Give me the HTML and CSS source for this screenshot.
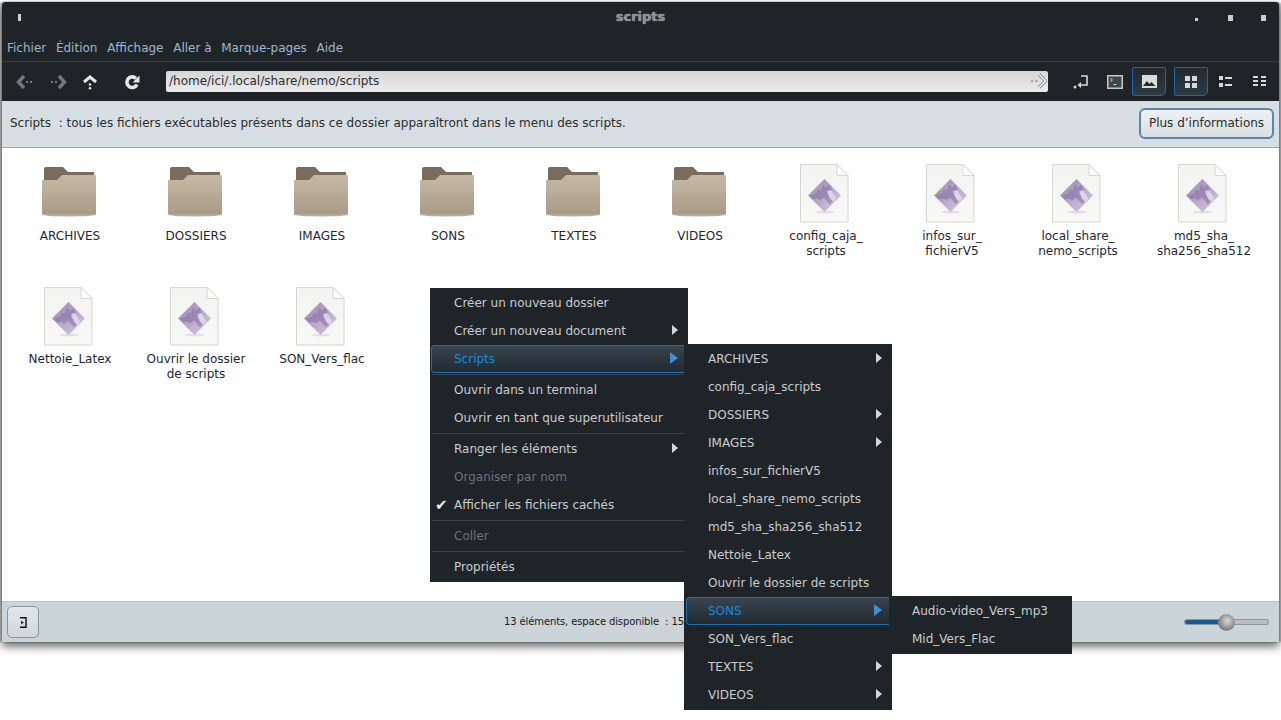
FILE: index.html
```html
<!DOCTYPE html>
<html lang="fr">
<head>
<meta charset="utf-8">
<title>scripts</title>
<link rel="stylesheet" href="styles.css">
</head>
<body>
<svg class="defs" width="0" height="0">
  <defs>
    <linearGradient id="fold" x1="0" y1="0" x2="0" y2="1"><stop offset="0" stop-color="#c6baa7"/><stop offset="1" stop-color="#a99b84"/></linearGradient>
    <linearGradient id="page" x1="0" y1="0" x2="0" y2="1"><stop offset="0" stop-color="#f3f3f1"/><stop offset="1" stop-color="#f8f8f7"/></linearGradient>
    <linearGradient id="dia" x1="0" y1="0" x2="1" y2="1"><stop offset="0" stop-color="#9884b2"/><stop offset="1" stop-color="#d8cde2"/></linearGradient>
    <symbol id="folder" viewBox="0 0 56 60">
      <ellipse cx="28" cy="50.500" rx="27.500" ry="2" fill="#77746f" opacity=".6"/>
      <path d="M3 5a2 2 0 0 1 2-2h17l5 5h26v12H3z" fill="#7a6c5a"/>
      <path d="M21 11h33a1 1 0 0 1 1 1v37a1 1 0 0 1-1 1H2a1 1 0 0 1-1-1V17a1 1 0 0 1 1-1h14z" fill="url(#fold)"/>
    </symbol>
    <symbol id="script" viewBox="0 0 50 60">
      <path d="M.5 .5H37L48 11.500V58H.5z" fill="url(#page)" stroke="#d6d6d4"/>
      <path d="M37 .5v11h11z" fill="#fff" stroke="#d6d6d4"/>
      <ellipse cx="25" cy="48" rx="10" ry="1.500" fill="#e2e0e3"/>
      <path d="M24.500 15L41 31.500 24.500 48 8 31.500z" fill="url(#dia)"/>
      <path d="M10 31.500l6-2 2-4 3 1 2-6 3 3 3-3 3 5-5 4 6 7-3 4-6-7-4 3-3-2-4 1z" fill="#7f6a9b" opacity=".5"/>
      <path d="M27 27l3 8 4 3 2-4-5-8z" fill="#eae4ef" opacity=".7"/>
    </symbol>
  </defs>
</svg>

<div class="window">
  <header class="titlebar">
    <span class="wm-left"></span>
    <span class="title">scripts</span>
    <span class="wm-buttons">
      <span class="wm wm-min"></span>
      <span class="wm wm-max"></span>
      <span class="wm wm-close"></span>
    </span>
  </header>
  <nav class="menubar">
    <span>Fichier</span><span>Édition</span><span>Affichage</span><span>Aller à</span><span>Marque-pages</span><span>Aide</span>
  </nav>
  <div class="toolbar">
    <div class="nav-group">
      <svg class="tb-icon dim" width="18" height="16" viewBox="0 0 18 16"><path d="M8 2L2.500 8 8 14" fill="none" stroke="currentColor" stroke-width="3.400"/><circle cx="11" cy="8" r="1.200" fill="currentColor"/><circle cx="15" cy="8" r="1.200" fill="currentColor"/></svg>
      <svg class="tb-icon dim" width="18" height="16" viewBox="0 0 18 16"><path d="M10 2l5.500 6-5.500 6" fill="none" stroke="currentColor" stroke-width="3.400"/><circle cx="3" cy="8" r="1.200" fill="currentColor"/><circle cx="7" cy="8" r="1.200" fill="currentColor"/></svg>
      <svg class="tb-icon" width="16" height="16" viewBox="0 0 16 16"><path d="M2 8l6-5 6 5" fill="none" stroke="currentColor" stroke-width="3"/><circle cx="8" cy="10.500" r="1.300" fill="currentColor"/><circle cx="8" cy="14.300" r="1.300" fill="currentColor"/></svg>
      <svg class="tb-icon reload" width="16" height="16" viewBox="0 0 16 16"><path d="M13 10.500A5.300 5.300 0 1 1 12 4.500" fill="none" stroke="currentColor" stroke-width="3.600"/><path d="M15.500 1.500v7h-7z" fill="currentColor"/></svg>
    </div>
    <div class="path-entry">
      <span>/home/ici/.local/share/nemo/scripts</span>
      <svg width="18" height="16" viewBox="0 0 18 16"><path d="M10 1.500l6.500 6.500-6.500 6.500" fill="none" stroke="#8f8f8f" stroke-width="3.200"/><path d="M10 1.500l6.500 6.500-6.500 6.500" fill="none" stroke="#f4f4f4" stroke-width="1.400"/><circle cx="3" cy="8" r="1.300" fill="#aaa"/><circle cx="7.500" cy="8" r="1.300" fill="#aaa"/></svg>
    </div>
    <div class="tool-group">
      <span class="tool"><svg width="16" height="16" viewBox="0 0 16 16"><path d="M8 2h6v9H6" fill="none" stroke="#d8d8d8" stroke-width="1.600"/><path d="M8 8l-3.500 3L8 14z" fill="#d8d8d8"/><circle cx="2" cy="13" r="1.500" fill="#d8d8d8"/></svg></span>
      <span class="tool"><svg width="16" height="14" viewBox="0 0 16 14"><rect x=".75" y=".75" width="14.500" height="12.500" fill="#3f4648" stroke="#c8c8c8" stroke-width="1.500"/><path d="M3.500 3.500l2 1.500-2 1.500M6.500 9.500h3" fill="none" stroke="#d8d8d8"/></svg></span>
      <span class="tool active"><svg width="15" height="13" viewBox="0 0 15 13"><rect width="15" height="13" fill="#dcdcdc"/><path d="M1 11l4-5 2.500 3 2-2 4 4z" fill="#22282c"/></svg></span>
    </div>
    <div class="tool-group views">
      <span class="tool active"><svg width="12" height="12" viewBox="0 0 12 12" fill="#d8d8d8"><rect width="5" height="5"/><rect x="7" width="5" height="5"/><rect y="7" width="5" height="5"/><rect x="7" y="7" width="5" height="5"/></svg></span>
      <span class="tool"><svg width="13" height="11" viewBox="0 0 13 11" fill="#d8d8d8"><rect width="4" height="4"/><rect x="6" y="1" width="7" height="2"/><rect y="7" width="4" height="4"/><rect x="6" y="8" width="7" height="2"/></svg></span>
      <span class="tool"><svg width="13" height="11" viewBox="0 0 13 11" fill="#d8d8d8"><rect width="5" height="2"/><rect x="8" width="5" height="2"/><rect y="4" width="5" height="2"/><rect x="8" y="4" width="5" height="2"/><rect y="8" width="5" height="2"/><rect x="8" y="8" width="5" height="2"/></svg></span>
    </div>
  </div>
  <div class="infobar">
    <span>Scripts  : tous les fichiers exécutables présents dans ce dossier apparaîtront dans le menu des scripts.</span>
    <button class="more">Plus d’informations</button>
  </div>
  <main class="files">
    <figure class="item"><svg class="icon" width="56" height="60"><use href="#folder"/></svg><figcaption>ARCHIVES</figcaption></figure>
    <figure class="item"><svg class="icon" width="56" height="60"><use href="#folder"/></svg><figcaption>DOSSIERS</figcaption></figure>
    <figure class="item"><svg class="icon" width="56" height="60"><use href="#folder"/></svg><figcaption>IMAGES</figcaption></figure>
    <figure class="item"><svg class="icon" width="56" height="60"><use href="#folder"/></svg><figcaption>SONS</figcaption></figure>
    <figure class="item"><svg class="icon" width="56" height="60"><use href="#folder"/></svg><figcaption>TEXTES</figcaption></figure>
    <figure class="item"><svg class="icon" width="56" height="60"><use href="#folder"/></svg><figcaption>VIDEOS</figcaption></figure>
    <figure class="item"><svg class="icon" width="50" height="60"><use href="#script"/></svg><figcaption>config_caja_<br>scripts</figcaption></figure>
    <figure class="item"><svg class="icon" width="50" height="60"><use href="#script"/></svg><figcaption>infos_sur_<br>fichierV5</figcaption></figure>
    <figure class="item"><svg class="icon" width="50" height="60"><use href="#script"/></svg><figcaption>local_share_<br>nemo_scripts</figcaption></figure>
    <figure class="item"><svg class="icon" width="50" height="60"><use href="#script"/></svg><figcaption>md5_sha_<br>sha256_sha512</figcaption></figure>
    <figure class="item"><svg class="icon" width="50" height="60"><use href="#script"/></svg><figcaption>Nettoie_Latex</figcaption></figure>
    <figure class="item"><svg class="icon" width="50" height="60"><use href="#script"/></svg><figcaption>Ouvrir le dossier<br>de scripts</figcaption></figure>
    <figure class="item"><svg class="icon" width="50" height="60"><use href="#script"/></svg><figcaption>SON_Vers_flac</figcaption></figure>
  </main>
  <footer class="statusbar">
    <span class="side-btn"><svg width="8" height="11" viewBox="0 0 8 11"><path d="M1 .7h6v9.600H1" fill="none" stroke="#111" stroke-width="1.400"/><path d="M2 3.500l3 2-3 2z" fill="#333"/></svg></span>
    <span class="status-text">13 éléments, espace disponible  : 15,3 Go</span>
    <span class="slider"><span class="slider-fill"></span><span class="knob"></span></span>
  </footer>
</div>

<div class="menu menu-main">
  <div class="row">Créer un nouveau dossier</div>
  <div class="row sub">Créer un nouveau document</div>
  <div class="row sub hot">Scripts</div>
  <div class="sep"></div>
  <div class="row">Ouvrir dans un terminal</div>
  <div class="row">Ouvrir en tant que superutilisateur</div>
  <div class="sep"></div>
  <div class="row sub">Ranger les éléments</div>
  <div class="row off">Organiser par nom</div>
  <div class="row checked">Afficher les fichiers cachés</div>
  <div class="sep"></div>
  <div class="row off">Coller</div>
  <div class="sep"></div>
  <div class="row">Propriétés</div>
</div>
<div class="menu menu-scripts">
  <div class="row sub">ARCHIVES</div>
  <div class="row">config_caja_scripts</div>
  <div class="row sub">DOSSIERS</div>
  <div class="row sub">IMAGES</div>
  <div class="row">infos_sur_fichierV5</div>
  <div class="row">local_share_nemo_scripts</div>
  <div class="row">md5_sha_sha256_sha512</div>
  <div class="row">Nettoie_Latex</div>
  <div class="row">Ouvrir le dossier de scripts</div>
  <div class="row sub hot">SONS</div>
  <div class="row">SON_Vers_flac</div>
  <div class="row sub">TEXTES</div>
  <div class="row sub">VIDEOS</div>
</div>
<div class="menu menu-sons">
  <div class="row">Audio-video_Vers_mp3</div>
  <div class="row">Mid_Vers_Flac</div>
</div>
</body>
</html>
```
FILE: styles.css
```css
* { box-sizing: border-box; }
html, body { margin: 0; height: 720px; overflow: hidden; background: #fff; }
body { font: 12px/15px "DejaVu Sans", sans-serif; position: relative; }
.defs { position: absolute; }

.window {
  margin: 2px 2px 0;
  height: 640px;
  display: flex;
  flex-direction: column;
  background: #fff;
  box-shadow: 0 5px 9px rgba(0,0,0,.55), -2px 0 2px rgba(0,0,0,.35), 2px 0 2px rgba(0,0,0,.35);
  border-radius: 3px 3px 0 0;
}

.titlebar {
  height: 31px;
  flex: none;
  background: #1f2428;
  display: flex;
  align-items: center;
  position: relative;
  border-radius: 3px 3px 0 0;
}
.wm-left { width: 3px; height: 7px; background: #cfcfcf; margin: 0 0 1px 16px; }
.title {
  position: absolute;
  left: 0; right: 0; top: 7px;
  text-align: center;
  font-weight: 700;
  font-size: 13px;
  color: #8e9194;
  text-shadow: 0 0 1px #c8c8c8;
}
.wm-buttons { margin-left: auto; display: flex; align-items: center; margin-right: 13px; }
.wm { display: block; background: #cdcdcd; }
.wm-min { width: 3px; height: 3px; margin: 4px 30px 0 0; }
.wm-max { width: 5px; height: 6px; margin-right: 28px; }
.wm-close { width: 5px; height: 6px; }

.menubar {
  height: 29px;
  flex: none;
  background: #1f2428;
  border-bottom: 1px solid #363b3f;
  display: flex;
  gap: 9.700px;
  padding: 8px 0 0 5px;
  color: #9fb6cb;
}

.toolbar {
  height: 39px;
  flex: none;
  background: #1f2428;
  display: flex;
  align-items: center;
  color: #e6e6e6;
}
.nav-group { width: 164px; display: flex; align-items: center; position: relative; height: 100%; }
.tb-icon { flex: none; display: block; }
.nav-group .tb-icon:nth-child(1) { margin-left: 14px; }
.nav-group .tb-icon:nth-child(2) { margin-left: 15px; }
.nav-group .tb-icon:nth-child(3) { margin-left: 15px; }
.nav-group .reload { margin-left: 26px; }
.dim { color: #73787c; }
.path-entry {
  width: 882px;
  height: 21px;
  background: linear-gradient(#d6d6d6, #ececec);
  border-radius: 2px;
  display: flex;
  align-items: center;
  justify-content: space-between;
  padding: 0 1px 1px 3px;
  color: #2b2e31;
}
.tool-group { display: flex; align-items: center; margin-left: 16px; }
.views { margin-left: 8px; }
.tool { width: 34px; height: 29px; display: flex; align-items: center; justify-content: center; }
.active {
  background: linear-gradient(#232a30, #2f3a43);
  border: 1px solid #1f6aa8;
  border-radius: 2px 2px 5px 2px;
}

.infobar {
  height: 47px;
  flex: none;
  background: #d8dfe4;
  border-bottom: 1px solid #7db0e2;
  color: #2c2c2c;
  display: flex;
  align-items: center;
  justify-content: space-between;
  padding: 0 5px 2px 8px;
  white-space: pre;
}
.more {
  width: 135px;
  height: 31px;
  font: inherit;
  color: #2c2c2c;
  background: linear-gradient(#eef1f3, #d9dfe3);
  border: 2px solid #5b85aa;
  border-radius: 6px;
  padding: 0;
}

.files {
  flex: 1;
  min-height: 0;
  display: grid;
  grid-template-columns: repeat(10, 126px);
  grid-auto-rows: 123px;
  padding: 16px 0 0 4px;
  color: #1d2730;
}
.item { margin: 0; text-align: center; display: flex; flex-direction: column; align-items: center; }
.icon { display: block; height: 60px; margin-bottom: 5px; flex: none; }
.item figcaption { white-space: nowrap; padding-left: 2px; }

.statusbar {
  height: 41px;
  flex: none;
  background: #cbd4d9;
  border-top: 1px solid #bcc5ca;
  display: flex;
  align-items: center;
  position: relative;
  padding-left: 5px;
  color: #1c1c1c;
  font-size: 10px;
}
.side-btn {
  width: 32px; height: 32px;
  border: 1px solid #8b9499;
  border-radius: 5px;
  background: linear-gradient(#e2e7ea, #cfd7dc);
  display: flex; align-items: center; justify-content: center;
}
.status-text { margin-left: 465px; white-space: pre; position: relative; top: -1px; letter-spacing: -.12px; }
.slider {
  position: absolute;
  left: 1183px; top: 18px;
  width: 83px; height: 4px;
  border-radius: 2px;
  background: #b7c0c5;
  box-shadow: 0 0 0 1px #8f989d;
}
.slider-fill { display: block; width: 40px; height: 100%; background: #1c5b92; border-radius: 2px; }
.knob {
  position: absolute;
  left: 33px; top: -6px;
  width: 17px; height: 17px;
  border-radius: 50%;
  background: radial-gradient(circle at 55% 40%, #dcdcdc, #8d8d8d 55%, #656565);
}

.menu {
  position: absolute;
  background: #1f2428;
  color: #c9ccce;
  padding-bottom: 2px;
}
.menu-main { left: 430px; top: 288px; width: 258px; }
.menu-scripts { left: 684px; top: 344px; width: 208px; }
.menu-sons { left: 889px; top: 596px; width: 183px; }
.row {
  height: 28px;
  line-height: 30px;
  padding-left: 24px;
  white-space: nowrap;
  position: relative;
}
.menu-sons .row { padding-left: 23px; }
.sep { height: 1px; margin: 2px 0 0 2px; background: #3b4044; width: 252px; }
.sub::after {
  content: "";
  position: absolute;
  right: 10px; top: 9px;
  border-left: 6px solid #d3d6d8;
  border-top: 5.500px solid transparent;
  border-bottom: 5.500px solid transparent;
}
.off { color: #6b747a; }
.checked::before {
  content: "✔";
  position: absolute;
  left: 5px; top: 0;
  color: #ececec;
  font-size: 15px;
}
.hot {
  color: #1e88dc;
  background: linear-gradient(#3a4650, #1f2830);
  box-shadow: inset 0 0 0 1px #1d6fb4;
  border-radius: 4px 0 0 4px;
  top: 1px;
  margin-left: 1px;
  padding-left: 23px;
  line-height: 28px;
}
.hot::after {
  border-left: 8px solid #3f8fd2;
  border-top: 6.500px solid transparent;
  border-bottom: 6.500px solid transparent;
  top: 7px;
  right: 10px;
}
.menu-scripts .hot { margin-left: 2px; padding-left: 22px; }
```
